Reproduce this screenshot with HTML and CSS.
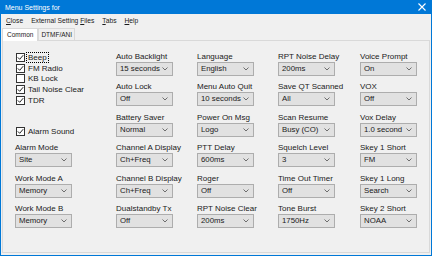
FILE: index.html
```html
<!DOCTYPE html>
<html lang="en">
<head>
    <meta charset="UTF-8">
    <title>Menu Settings</title>
    <link rel="stylesheet" href="styles.css">
</head>
<body>
    <div class="window">
        <div class="titlebar">
            <span class="title">Menu Settings for</span>
            <svg class="close-x" width="8" height="8" viewBox="0 0 8 8">
                <path d="M0.5 0.5 L7.5 7.5 M7.5 0.5 L0.5 7.5" stroke="#fff" stroke-width="1.1"/>
            </svg>
        </div>
        <div class="menubar">
            <span class="menu-item"><u>C</u>lose</span>
            <span class="menu-item">External Setting <u>F</u>iles</span>
            <span class="menu-item"><u>T</u>abs</span>
            <span class="menu-item"><u>H</u>elp</span>
        </div>
        <div class="tabs">
            <div class="tab active">Common</div>
            <div class="tab">DTMF/ANI</div>
        </div>
        <div class="page">
            <div class="grid">
                <div class="checks">
                    <label class="check"><span class="box on"></span><span class="focus">Beep</span></label>
                    <label class="check"><span class="box on"></span>FM Radio</label>
                    <label class="check"><span class="box"></span>KB Lock</label>
                    <label class="check"><span class="box on"></span>Tail Noise Clear</label>
                    <label class="check"><span class="box on"></span>TDR</label>
                    <label class="check alarm"><span class="box on"></span>Alarm Sound</label>
                </div>
                <div class="field"><div class="label">Alarm Mode</div><div class="combo">Site</div></div>
                <div class="field"><div class="label">Work Mode A</div><div class="combo">Memory</div></div>
                <div class="field"><div class="label">Work Mode B</div><div class="combo">Memory</div></div>

                <div class="field"><div class="label">Auto Backlight</div><div class="combo">15 seconds</div></div>
                <div class="field"><div class="label">Auto Lock</div><div class="combo">Off</div></div>
                <div class="field"><div class="label">Battery Saver</div><div class="combo">Normal</div></div>
                <div class="field"><div class="label">Channel A Display</div><div class="combo">Ch+Freq</div></div>
                <div class="field"><div class="label">Channel B Display</div><div class="combo">Ch+Freq</div></div>
                <div class="field"><div class="label">Dualstandby Tx</div><div class="combo">Off</div></div>

                <div class="field"><div class="label">Language</div><div class="combo">English</div></div>
                <div class="field"><div class="label">Menu Auto Quit</div><div class="combo">10 seconds</div></div>
                <div class="field"><div class="label">Power On Msg</div><div class="combo">Logo</div></div>
                <div class="field"><div class="label">PTT Delay</div><div class="combo">600ms</div></div>
                <div class="field"><div class="label">Roger</div><div class="combo">Off</div></div>
                <div class="field"><div class="label">RPT Noise Clear</div><div class="combo">200ms</div></div>

                <div class="field"><div class="label">RPT Noise Delay</div><div class="combo">200ms</div></div>
                <div class="field"><div class="label">Save QT Scanned</div><div class="combo">All</div></div>
                <div class="field"><div class="label">Scan Resume</div><div class="combo">Busy (CO)</div></div>
                <div class="field"><div class="label">Squelch Level</div><div class="combo">3</div></div>
                <div class="field"><div class="label">Time Out Timer</div><div class="combo">Off</div></div>
                <div class="field"><div class="label">Tone Burst</div><div class="combo">1750Hz</div></div>

                <div class="field"><div class="label">Voice Prompt</div><div class="combo">On</div></div>
                <div class="field"><div class="label">VOX</div><div class="combo">Off</div></div>
                <div class="field"><div class="label">Vox Delay</div><div class="combo">1.0 second</div></div>
                <div class="field"><div class="label">Skey 1 Short</div><div class="combo">FM</div></div>
                <div class="field"><div class="label">Skey 1 Long</div><div class="combo">Search</div></div>
                <div class="field"><div class="label">Skey 2 Short</div><div class="combo">NOAA</div></div>
            </div>
        </div>
    </div>
</body>
</html>
```

FILE: styles.css
```css
body {
    margin: 0;
    font-family: "Liberation Sans", Arial, sans-serif;
    color: #1a1a1a;
    background: #fff;
}
.window {
    width: 432px;
    height: 256px;
    box-sizing: border-box;
    border: 1px solid #0078d7;
    border-top: none;
    background: #f0f0f0;
    display: flex;
    flex-direction: column;
}
.titlebar {
    height: 14px;
    margin: 0 -1px;
    padding: 0 6px 0 5px;
    background: #0078d7;
    color: #fff;
    font-size: 7px;
    display: flex;
    align-items: center;
    justify-content: space-between;
}
.menubar {
    height: 13px;
    display: flex;
    align-items: center;
    font-size: 6.7px;
    padding-left: 1px;
}
.menu-item {
    padding: 0 4px;
}
.tabs {
    height: 13px;
    display: flex;
    align-items: flex-end;
    padding-left: 1px;
    font-size: 6.5px;
}
.tab {
    height: 11px;
    line-height: 11px;
    padding: 0 2px;
    border: 1px solid #d9d9d9;
    border-bottom: none;
    background: #f0f0f0;
}
.tab.active {
    height: 12px;
    line-height: 12px;
    padding: 0 4px;
    background: #fff;
    margin-bottom: -1px;
    position: relative;
}
.page {
    flex: 1;
    margin: 0 1px 2px 1px;
    border: 1px solid #d9d9d9;
    padding: 11px 0 0 12px;
}
.grid {
    display: grid;
    grid-template-columns: 101px 81px 81px 82px 60px;
    grid-template-rows: repeat(6, 24px);
    row-gap: 6.4px;
    grid-auto-flow: column;
    font-size: 8px;
}
.checks {
    grid-row: span 3;
    display: flex;
    flex-direction: column;
}
.check {
    height: 11.6px;
    display: flex;
    align-items: center;
}
.check.alarm {
    margin-top: 20px;
}
.box {
    width: 9px;
    height: 9px;
    box-sizing: border-box;
    border: 1px solid #333;
    background: #fff;
    margin: 0 3px 0 1px;
    flex: none;
}
.box.on {
    background: #fff url("data:image/svg+xml,%3Csvg xmlns='http://www.w3.org/2000/svg' width='7' height='7'%3E%3Cpolyline points='0.8,3.4 2.7,5.3 6.2,1.2' fill='none' stroke='%23222' stroke-width='1'/%3E%3C/svg%3E") no-repeat center;
}
.focus {
    outline: 1px dotted #000;
    padding: 0 1px;
    margin-left: -1px;
    line-height: 9px;
}
.field {
    display: flex;
    flex-direction: column;
}
.label {
    height: 10px;
    line-height: 10px;
    white-space: nowrap;
}
.combo {
    width: 57px;
    height: 14px;
    box-sizing: border-box;
    border: 1px solid #adadad;
    background: #e1e1e1 url("data:image/svg+xml,%3Csvg xmlns='http://www.w3.org/2000/svg' width='6' height='4'%3E%3Cpolyline points='0.5,0.5 3,3 5.5,0.5' fill='none' stroke='%23606060' stroke-width='0.9'/%3E%3C/svg%3E") no-repeat right 4px center;
    padding-left: 3px;
    font-size: 7.8px;
    line-height: 12px;
    white-space: nowrap;
}
```
